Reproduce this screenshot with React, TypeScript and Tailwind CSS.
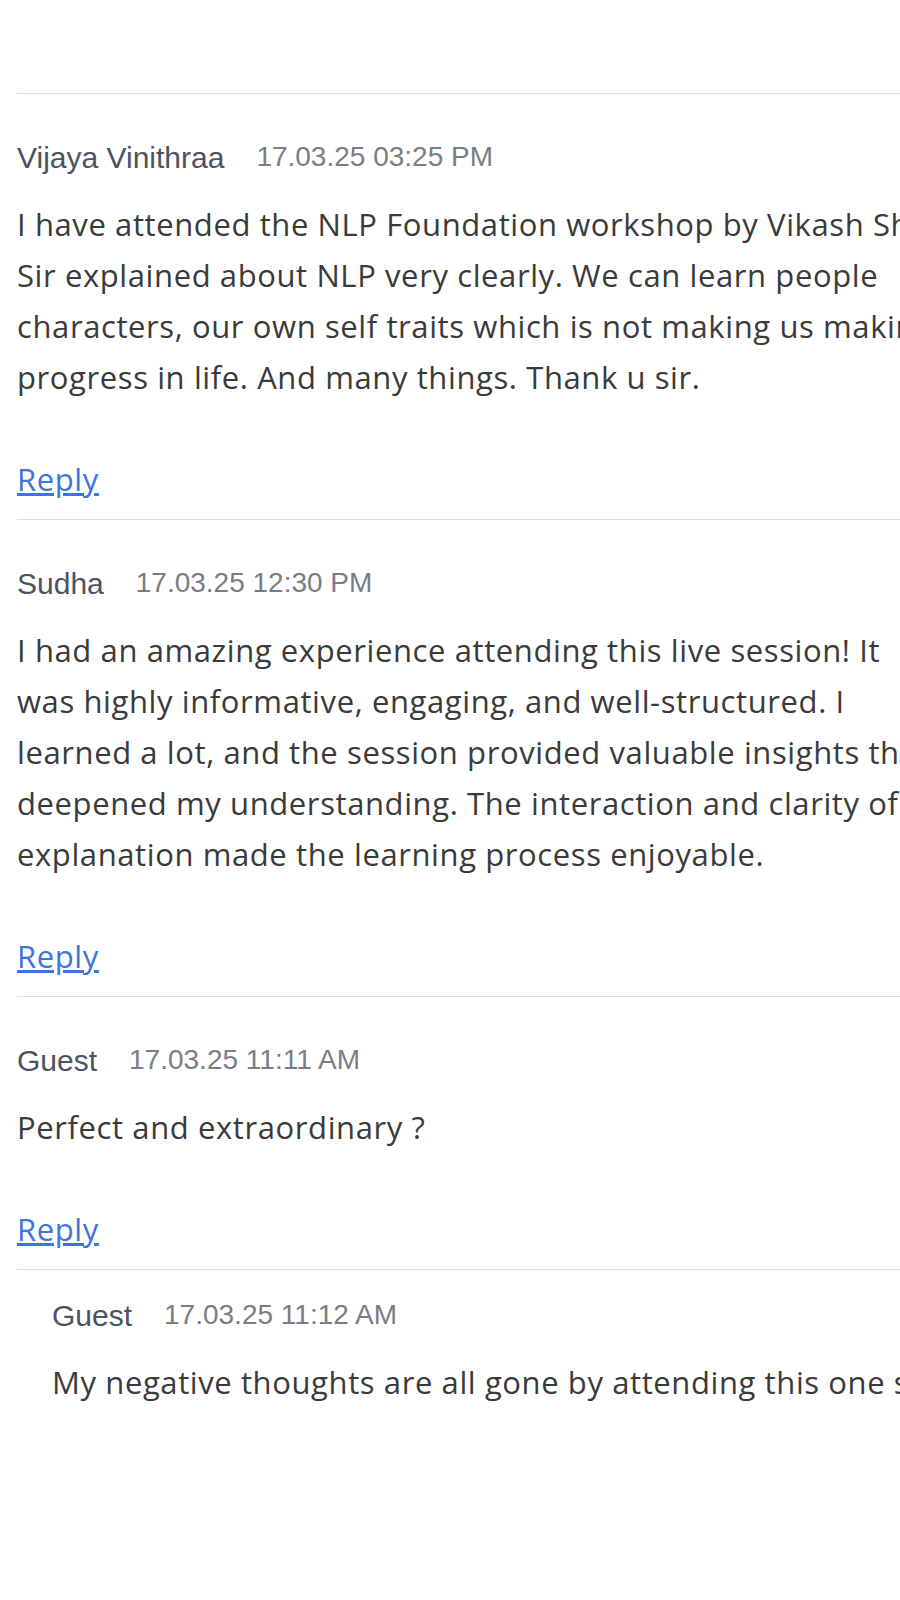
const comments = [
  {
    name: 'Vijaya Vinithraa',
    date: '17.03.25 03:25 PM',
    lines: [
      'I have attended the NLP Foundation workshop by Vikash Sharma.',
      'Sir explained about NLP very clearly. We can learn people',
      'characters, our own self traits which is not making us making',
      'progress in life. And many things. Thank u sir.',
    ],
  },
  {
    name: 'Sudha',
    date: '17.03.25 12:30 PM',
    lines: [
      'I had an amazing experience attending this live session! It',
      'was highly informative, engaging, and well-structured. I',
      'learned a lot, and the session provided valuable insights that',
      'deepened my understanding. The interaction and clarity of the',
      'explanation made the learning process enjoyable.',
    ],
  },
  {
    name: 'Guest',
    date: '17.03.25 11:11 AM',
    lines: ['Perfect and extraordinary ?'],
    replies: [
      {
        name: 'Guest',
        date: '17.03.25 11:12 AM',
        lines: ['My negative thoughts are all gone by attending this one session.'],
      },
    ],
  },
];

type Comment = {
  name: string;
  date: string;
  lines: string[];
  replies?: Comment[];
};

const Header = ({ name, date }: { name: string; date: string }) => (
  <div className="flex items-center h-[40px] whitespace-nowrap font-['Liberation_Sans',Arial,sans-serif]">
    <span className="text-[30px] text-[#4b5262]">{name}</span>
    <span className="ml-[32px] text-[28px] text-[#7a7d84]">{date}</span>
  </div>
);

const Body = ({ lines }: { lines: string[] }) => (
  <p className="mt-[22px] text-[31px] tracking-[0.6px] leading-[51px] text-[#3a3a3a] whitespace-nowrap font-['Segoe_UI','Open_Sans',sans-serif]">
    {lines.map((l, i) => (
      <span key={i} className="block">
        {l}
      </span>
    ))}
  </p>
);

export default function App() {
  return (
    <div className="w-[900px] min-h-[1600px] bg-white overflow-hidden">
      <div className="pt-[93px] pl-[17px] w-[1200px]">
        {comments.map((c: Comment, i) => (
          <div key={i}>
            <div className="border-t border-[#dcdcdc] pt-[43px] pb-[20px]">
              <Header name={c.name} date={c.date} />
              <Body lines={c.lines} />
              <a
                href="#"
                className="block mt-[56px] h-[40px] leading-[40px] text-[31px] tracking-[0.6px] text-[#3c74e0] underline font-['Segoe_UI','Open_Sans',sans-serif] w-fit"
              >
                Reply
              </a>
            </div>
            {c.replies?.map((r, j) => (
              <div key={j} className="border-t border-[#dcdcdc] pt-[25px] pl-[35px] pb-[20px]">
                <Header name={r.name} date={r.date} />
                <Body lines={r.lines} />
              </div>
            ))}
          </div>
        ))}
      </div>
    </div>
  );
}
